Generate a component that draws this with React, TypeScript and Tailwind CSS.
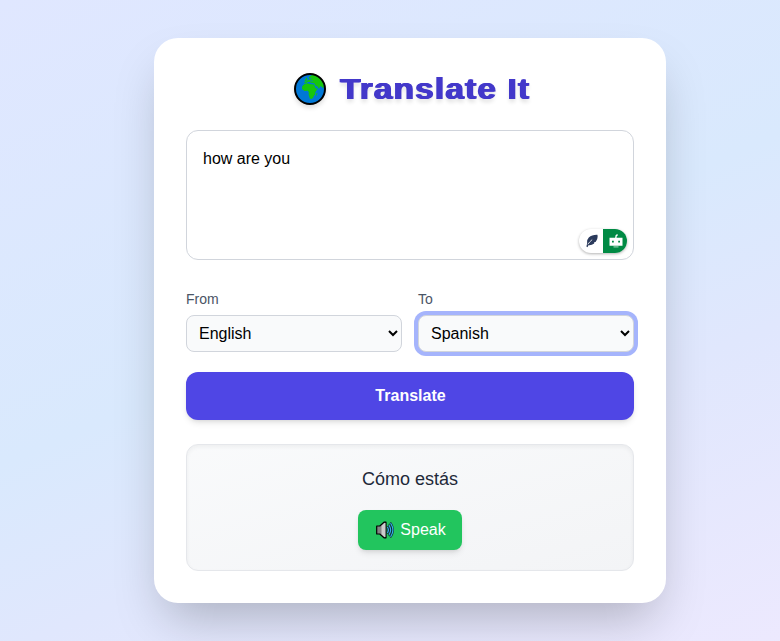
import { useState } from "react";

function Globe() {
  return (
    <svg viewBox="0 0 32 32" className="relative -top-px h-8 w-8 drop-shadow-[0_3px_2px_rgba(0,0,0,0.12)]" aria-hidden="true">
      <circle cx="16" cy="16" r="15" fill="#0078d7" />
      <g fill="#16c60c">
        <path d="M10.5 8 L12 5 L13 4.5 L13.2 6.5 L12.2 8Z" />
        <path d="M15 4 L18 2 H22 Q29 6 30 13 L29 15.5 L28 14 L26.5 13 L26 14 L25 16 L23.5 13.5 L22 13 L20.8 11.5 L20.3 10.2 L18.5 10 L17 9.8 L15.5 8.8 L13.5 9 L12.5 10 L10.5 10 L10.3 8.8 L12.5 8.3 L14.5 6.8 L16.5 6.5 L18.2 4.5 L16.5 5.6 L15 5.3Z" />
        <path d="M10.8 10.8 L14 10.3 L15 11.1 L20 11.6 L21.6 15.3 L23.8 15.8 L21.4 19 L21.2 21.5 L20 22.5 L19.2 24.8 L17.4 26 L15.8 25.6 L14.6 21.5 L14.8 19.3 L13.8 17.8 L10.5 18 L8 15.9 L8.2 13.3Z" />
        <path d="M22.3 20.5 L23.4 19.7 L22.8 22.6 L21.9 22.7Z" />
      </g>
      <path d="M16 7.8 L19 8 M14.3 5.2 V6.4" stroke="#0078d7" strokeWidth=".8" fill="none" />
      <circle cx="16" cy="16" r="15" fill="none" stroke="#000" strokeWidth="2" />
    </svg>
  );
}

function Speaker() {
  return (
    <svg viewBox="0 0 18 18" className="h-[18px] w-[18px]" aria-hidden="true">
      <path d="M.7 5 H3.8 L8 1.2 H10 V16.8 H8 L3.8 13 H.7Z" fill="#858585" stroke="#000" strokeWidth="1.2" strokeLinejoin="round" />
      <path d="M5.5 4.8 L8.4 2 H9.4 V16 H8.4 L5.5 13.2Z" fill="#cccccc" />
      <path d="M11.6 6.5 Q13.2 9 11.6 11.5 M13.2 4.5 Q16 9 13.2 13.5 M14.8 2.5 Q19 9 14.8 15.5" fill="none" stroke="#10202b" strokeWidth="2.2" strokeLinecap="round" />
      <path d="M11.6 6.5 Q13.2 9 11.6 11.5 M13.2 4.5 Q16 9 13.2 13.5 M14.8 2.5 Q19 9 14.8 15.5" fill="none" stroke="#31b0e8" strokeWidth="1.2" strokeLinecap="round" />
    </svg>
  );
}

function WritingBadge() {
  return (
    <div className="absolute right-[7px] bottom-[7px] flex h-6 w-12 overflow-hidden rounded-full bg-white shadow-[0_1px_3px_rgba(0,0,0,0.3)]">
      <span className="flex w-6 items-center justify-center pl-0.5">
        <svg viewBox="0 0 12 14" className="h-3.5 w-3" aria-hidden="true">
          <path d="M11.4 .8 Q6 .6 2.8 3.6 Q.7 6 1.2 9.2 L.4 12.6 L1.5 13.2 L2.4 11.2 Q5.5 11.6 8.2 9.6 L8 8.6 L9.8 7.8 Q12.3 4.6 11.4 .8Z" fill="#2b3a5c" />
          <path d="M1.9 10.4 Q3.6 7.6 6.2 5.6" stroke="#fff" strokeWidth=".8" fill="none" />
        </svg>
      </span>
      <span className="flex w-6 items-center justify-center bg-[#008a44] pl-0.5">
        <svg viewBox="0 0 14 14" className="h-3.5 w-3.5" aria-hidden="true">
          <path d="M6.8 4 L7.2 1.6 L8.6 .6" stroke="#fff" strokeWidth="1.4" fill="none" />
          <path d="M.5 3.7 H13.5 V11.7 H.5Z" fill="#fff" />
          <path d="M3 6.8 H4.8 V8.6 H3Z M9.2 6.8 H11 V8.6 H9.2Z" fill="#008a44" />
          <path d="M4.5 12.3 H9.5 V13.5 H4.5Z" fill="#8bcba9" />
        </svg>
      </span>
    </div>
  );
}

const languages = ["English", "Spanish", "French", "German", "Hindi"];

function LanguageSelect({ label, initial, active }: { label: string; initial: string; active?: boolean }) {
  const [value, setValue] = useState(initial);
  return (
    <label className="flex flex-1 flex-col">
      <span className="mb-1.5 text-sm leading-5 text-gray-600">{label}</span>
      <select
        value={value}
        onChange={(e) => setValue(e.target.value)}
        className={
          active
            ? "h-[37px] w-full rounded-lg border border-gray-300 bg-gray-50 p-2 text-black outline-none ring-4 ring-[#a5b4fc]"
            : "h-[37px] w-full rounded-lg border border-gray-300 bg-gray-50 p-2 text-black outline-none"
        }
      >
        {languages.map((l) => (
          <option key={l}>{l}</option>
        ))}
      </select>
    </label>
  );
}

export default function App() {
  return (
    <div className="h-[641px] w-full overflow-hidden">
      <div className="flex h-[641px] w-[820px] items-center justify-center bg-[linear-gradient(157deg,#e0e7ff_0%,#d9e9fd_47%,#e0e7fd_66%,#ede9fe_100%)] font-['Liberation_Sans',Arial,sans-serif]">
        <main className="h-[565px] w-[512px] rounded-3xl bg-white p-8 shadow-2xl">
          <h1 className="mb-6 flex h-9 items-center pt-[3px] pl-[108px] text-3xl font-bold text-[#4338ca]">
            <Globe />
            <span className="-mt-0.5 ml-[14px] inline-block origin-left scale-x-[1.11] tracking-[0.036em] whitespace-nowrap text-shadow-[0.8px_0_0_#4338ca,-0.7px_0_0_#4338ca,0_3px_4px_rgba(0,0,0,0.14)]">
              Translate It
            </span>
          </h1>
          <div className="relative h-[130px]">
            <textarea
              defaultValue="how are you"
              spellCheck={false}
              className="block h-full w-full resize-none rounded-xl border border-gray-300 bg-white p-4 leading-6 text-black outline-none"
            />
            <WritingBadge />
          </div>
          <div className="mt-[29px] flex gap-4">
            <LanguageSelect label="From" initial="English" />
            <LanguageSelect label="To" initial="Spanish" active />
          </div>
          <button className="mt-5 block h-12 w-full rounded-xl bg-[#4f46e5] pl-px font-bold text-white shadow-md">
            Translate
          </button>
          <section className="mt-6 flex h-[127px] flex-col items-center rounded-xl border border-gray-200 bg-linear-to-br from-gray-50 to-gray-100 pt-5 shadow-inner">
            <p className="text-lg leading-7 text-gray-800">Cómo estás</p>
            <button className="mt-[17px] flex h-10 w-[104px] items-center justify-center gap-1.5 rounded-lg bg-[#22c55e] pl-0.5 text-white shadow-md">
              <Speaker />
              Speak
            </button>
          </section>
        </main>
      </div>
    </div>
  );
}
